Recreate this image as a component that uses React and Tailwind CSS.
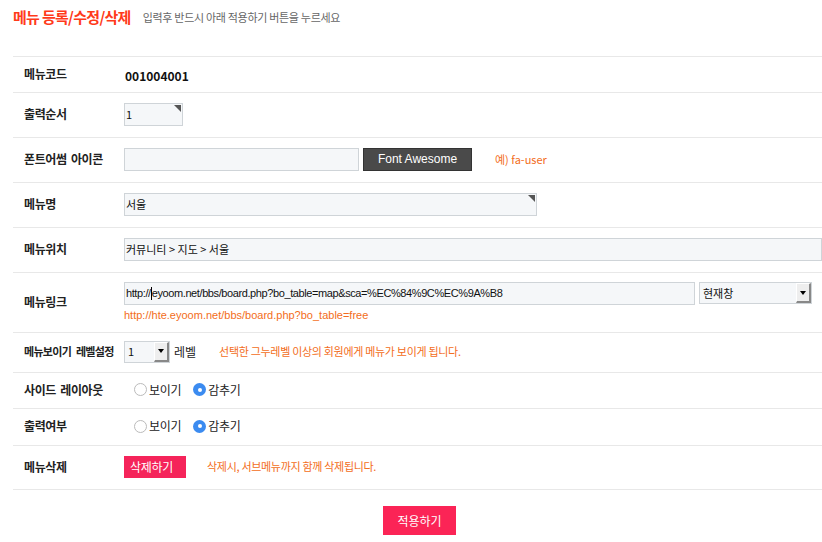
const font = { fontFamily: '"Noto Sans CJK KR", "Noto Sans", sans-serif' }
const latin = { fontFamily: '"Liberation Sans", "Noto Sans CJK KR", sans-serif' }

function Row({ label, h, small, children }) {
  return (
    <div className={`flex items-center border-b border-[#e8e8e8] pb-[2px] ${h}`}>
      <div className={`w-[111px] shrink-0 pl-[11px] font-bold text-[#222] whitespace-nowrap ${small ? 'text-[11px] tracking-[-0.7px] [word-spacing:3px]' : 'text-[12px] tracking-[-0.4px] [word-spacing:2px]'}`}>{label}</div>
      <div className="flex-1 min-w-0">{children}</div>
    </div>
  )
}

function Box({ w, corner, children }) {
  return (
    <div className={`relative h-[23px] border border-[#cfd4d8] bg-[#f5f7f9] flex items-center pl-[1px] text-[11px] text-[#111] whitespace-nowrap overflow-hidden ${w}`}>
      {children}
      {corner && <div className="absolute right-[1px] top-[1px] w-0 h-0 border-l-[7px] border-l-transparent border-t-[7px] border-t-[#555]" />}
    </div>
  )
}

function Select({ w, value }) {
  return (
    <div className={`h-[22px] border border-[#cfd4d8] bg-[#f5f7f9] flex items-center justify-between text-[11px] text-[#111] ${w}`}>
      <span className="pl-[3px]">{value}</span>
      <div className="h-full w-[15px] border-l border-t border-white border-r-2 border-b-2 border-r-[#888] border-b-[#888] bg-[#eee] flex items-center justify-center">
        <div className="w-0 h-0 border-l-[3px] border-r-[3px] border-t-[4px] border-l-transparent border-r-transparent border-t-black" />
      </div>
    </div>
  )
}

function Radio({ on, label }) {
  return (
    <label className="flex items-center gap-[2px] text-[12px] text-[#222] tracking-[-0.3px]">
      {on ? (
        <span className="w-[13px] h-[13px] rounded-full bg-[#3b8bf0] flex items-center justify-center">
          <span className="w-[4px] h-[4px] rounded-full bg-white" />
        </span>
      ) : (
        <span className="w-[13px] h-[13px] rounded-full border border-[#bbb] bg-white" />
      )}
      {label}
    </label>
  )
}

export default function App() {
  return (
    <div className="w-[822px] h-[542px] bg-white overflow-hidden" style={font}>
      <div className="flex items-center h-[34px] pl-[13px] pt-[1px]">
        <h2 className="text-[15px] font-bold text-[#ff3a1a] tracking-[-0.7px]">메뉴 등록/수정/삭제</h2>
        <span className="ml-[12px] text-[11px] text-[#666] tracking-[-0.3px]">입력후 반드시 아래 적용하기 버튼을 누르세요</span>
      </div>
      <div className="ml-[13px] mt-[22px] border-t border-[#e8e8e8]">
        <Row label="메뉴코드" h="h-[36px]">
          <span className="pl-[1px] text-[12px] font-bold text-[#111]">001004001</span>
        </Row>
        <Row label="출력순서" h="h-[45px]">
          <Box w="w-[59px]" corner>1</Box>
        </Row>
        <Row label="폰트어썸 아이콘" h="h-[45px]">
          <div className="flex items-center">
            <Box w="w-[235px]" />
            <button className="ml-[4px] w-[109px] h-[23px] bg-[#4a4a4a] border border-[#333] text-white text-[12px]" style={latin}>Font Awesome</button>
            <span className="ml-[23px] text-[11px] text-[#f36d21]">예) fa-user</span>
          </div>
        </Row>
        <Row label="메뉴명" h="h-[45px]">
          <Box w="w-[413px]" corner>서울</Box>
        </Row>
        <Row label="메뉴위치" h="h-[45px]">
          <Box w="w-full">커뮤니티 &gt; 지도 &gt; 서울</Box>
        </Row>
        <Row label="메뉴링크" h="h-[60px]">
          <div className="pt-[2px]">
            <div className="flex items-center">
              <Box w="w-[571px]">
                <span className="tracking-[-0.4px] flex items-center" style={latin}>
                  http://<span className="inline-block w-px h-[13px] bg-black" />eyoom.net/bbs/board.php?bo_table=map&amp;sca=%EC%84%9C%EC%9A%B8
                </span>
              </Box>
              <div className="ml-[4px]"><Select w="w-[113px]" value="현재창" /></div>
            </div>
            <div className="mt-[2px] text-[11px] text-[#f36d21]" style={latin}>http://hte.eyoom.net/bbs/board.php?bo_table=free</div>
          </div>
        </Row>
        <Row label="메뉴보이기 레벨설정" h="h-[40px]" small>
          <div className="flex items-center">
            <Select w="w-[46px]" value="1" />
            <span className="ml-[4px] text-[12px] text-[#222]">레벨</span>
            <span className="ml-[23px] text-[11px] text-[#f36d21] tracking-[-0.3px]">선택한 그누레벨 이상의 회원에게 메뉴가 보이게 됩니다.</span>
          </div>
        </Row>
        <Row label="사이드 레이아웃" h="h-[36px]">
          <div className="flex items-center gap-[12px] pl-[10px]">
            <Radio label="보이기" />
            <Radio on label="감추기" />
          </div>
        </Row>
        <Row label="출력여부" h="h-[37px]">
          <div className="flex items-center gap-[12px] pl-[10px]">
            <Radio label="보이기" />
            <Radio on label="감추기" />
          </div>
        </Row>
        <Row label="메뉴삭제" h="h-[44px]">
          <div className="flex items-center">
            <button className="w-[62px] h-[22px] bg-[#f5245a] text-white text-[12px] text-left pl-[6px] tracking-[-0.3px]">삭제하기</button>
            <span className="ml-[21px] text-[11px] text-[#f36d21] tracking-[-0.3px]">삭제시, 서브메뉴까지 함께 삭제됩니다.</span>
          </div>
        </Row>
      </div>
      <div className="flex justify-center pl-[17px] mt-[16px]">
        <button className="w-[73px] h-[29px] bg-[#fb2456] text-white text-[12px]">적용하기</button>
      </div>
    </div>
  )
}
